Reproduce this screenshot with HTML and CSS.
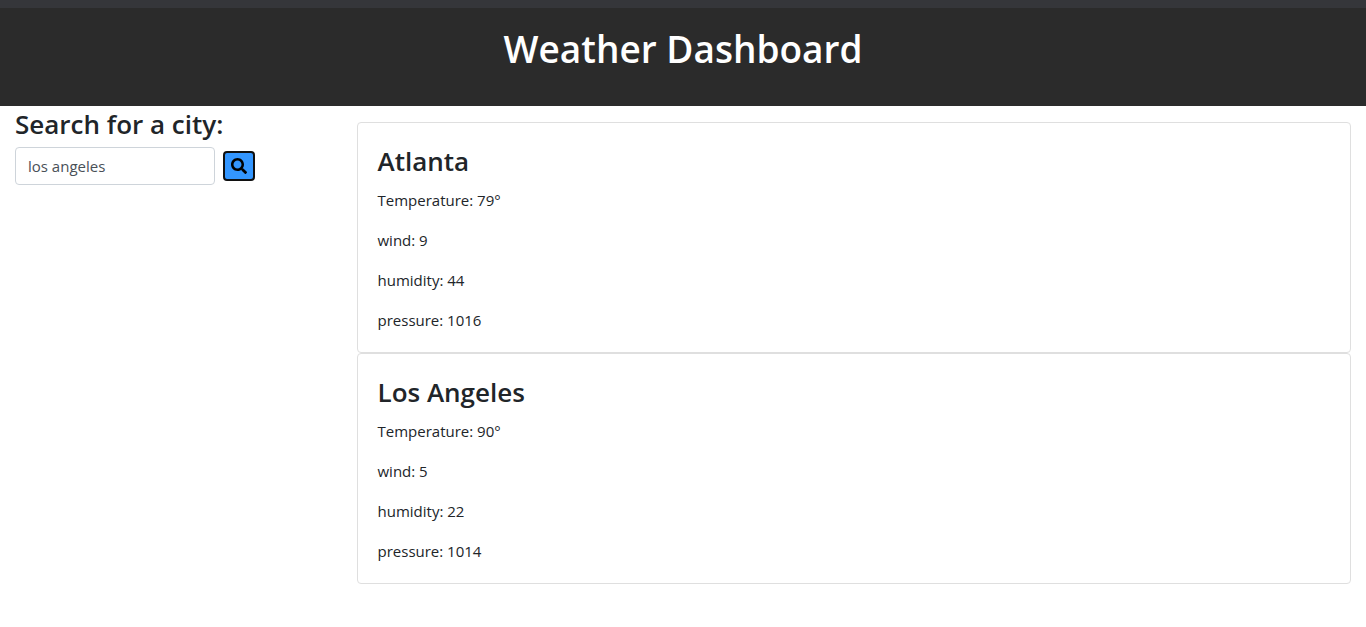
FILE: index.html
```html
<!DOCTYPE html>
<html lang="en">
<head>
<meta charset="utf-8">
<title>Weather Dashboard</title>
<link rel="stylesheet" href="styles.css">
</head>
<body>
<header class="banner"><h1 class="banner-title">Weather Dashboard</h1></header>
<main class="layout">
  <aside class="search">
    <h2 class="search-title"><label for="city">Search for a city:</label></h2>
    <form class="search-form">
      <input class="search-input" id="city" type="text" value="los angeles">
      <button class="search-button" type="button" aria-label="Search">
        <svg class="search-icon" viewBox="0 0 512 512" aria-hidden="true"><path d="M505 442.700L405.300 343c-4.500-4.500-10.600-7-17-7H372c27.600-35.300 44-79.700 44-128C416 93.100 322.900 0 208 0S0 93.100 0 208s93.100 208 208 208c48.300 0 92.700-16.400 128-44v16.300c0 6.400 2.500 12.500 7 17l99.700 99.700c9.400 9.400 24.600 9.400 33.900 0l28.300-28.300c9.400-9.400 9.400-24.600.1-34zM208 336c-70.700 0-128-57.200-128-128 0-70.700 57.200-128 128-128 70.700 0 128 57.200 128 128 0 70.700-57.200 128-128 128z"/></svg>
      </button>
    </form>
  </aside>
  <section class="results">
    <article class="card">
      <h3 class="card-title">Atlanta</h3>
      <p class="reading">Temperature: 79°</p>
      <p class="reading">wind: 9</p>
      <p class="reading">humidity: 44</p>
      <p class="reading">pressure: 1016</p>
    </article>
    <article class="card">
      <h3 class="card-title">Los Angeles</h3>
      <p class="reading">Temperature: 90°</p>
      <p class="reading">wind: 5</p>
      <p class="reading">humidity: 22</p>
      <p class="reading">pressure: 1014</p>
    </article>
  </section>
</main>
</body>
</html>
```
FILE: styles.css
```css
* { box-sizing: border-box; }
body {
  margin: 0;
  background: #fff;
  color: #212529;
  font: 400 15px/24px "Segoe UI", "Open Sans", "Noto Sans", sans-serif;
}
h1, h2, h3, p { margin: 0; }
.banner {
  padding: 16px 16px 32px;
  border-top: 8px solid #35363a;
  background: #2b2b2b;
  color: #fff;
  text-align: center;
}
.banner-title { font-size: 37px; line-height: 50px; font-weight: 600; }
.layout { display: grid; grid-template-columns: 1fr 3fr; }
.search { padding: 0 15px; }
.search-title { font-size: 26px; line-height: 36px; font-weight: 600; margin-bottom: 5px; }
.search-form { display: flex; align-items: center; gap: 8px; }
.search-input {
  width: 200px;
  height: 38px;
  padding: 6px 12px;
  border: 1px solid #ced4da;
  border-radius: 4px;
  color: #495057;
  font: inherit;
}
.search-button {
  display: grid;
  place-items: center;
  width: 32px;
  height: 30px;
  padding: 0;
  border: 2px solid #101010;
  border-radius: 4px;
  background: #3396ff;
  color: #000;
}
.search-icon { width: 16px; height: 16px; fill: currentColor; }
.results { padding: 16px 15px; }
.card { padding: 20px; border: 1px solid #dfdfdf; border-radius: 4px; }
.card-title { font-size: 26px; line-height: 36px; font-weight: 600; margin-bottom: 9px; }
.reading { color: #212529; }
.reading + .reading { margin-top: 16px; }
```
